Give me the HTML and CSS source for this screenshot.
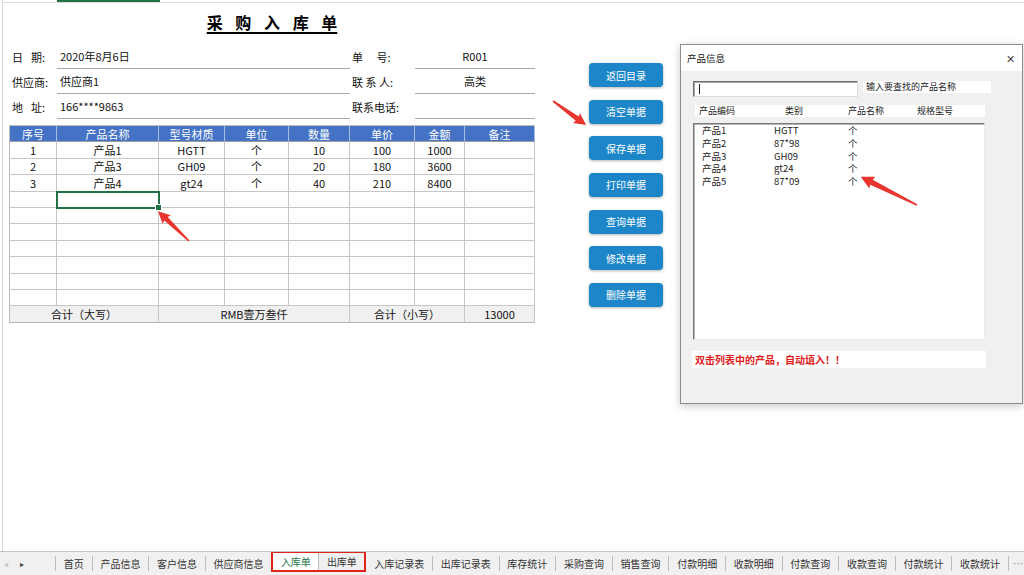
FILE: index.html
```html
<!DOCTYPE html>
<html lang="zh-CN">
<head>
<meta charset="utf-8">
<title>采购入库单</title>
<link rel="stylesheet" href="styles.css">
</head>
<body>
<div class="app">
  <div class="sheet">
    <div class="colhead"><span class="colsel"></span></div>
    <div class="content">
      <div class="form">
        <div class="title"><span>采 购 入 库 单</span></div>
        <div class="info">
          <div class="lbl">日&ensp; 期:</div><div class="val">2020年8月6日</div><div class="lbl2">单&emsp; 号:</div><div class="val c">R001</div>
          <div class="lbl">供应商:</div><div class="val">供应商1</div><div class="lbl2">联 系 人:</div><div class="val c">高类</div>
          <div class="lbl">地&ensp; 址:</div><div class="val">166****9863</div><div class="lbl2">联系电话:</div><div class="val c"></div>
        </div>
        <div class="tbl">
          <div class="th">序号</div><div class="th">产品名称</div><div class="th">型号材质</div><div class="th">单位</div><div class="th">数量</div><div class="th">单价</div><div class="th">金额</div><div class="th">备注</div>
          <div>1</div><div>产品1</div><div>HGTT</div><div>个</div><div>10</div><div>100</div><div>1000</div><div></div>
          <div>2</div><div>产品3</div><div>GH09</div><div>个</div><div>20</div><div>180</div><div>3600</div><div></div>
          <div>3</div><div>产品4</div><div>gt24</div><div>个</div><div>40</div><div>210</div><div>8400</div><div></div>
          <div></div><div class="sel"></div><div></div><div></div><div></div><div></div><div></div><div></div>
          <div></div><div></div><div></div><div></div><div></div><div></div><div></div><div></div>
          <div></div><div></div><div></div><div></div><div></div><div></div><div></div><div></div>
          <div></div><div></div><div></div><div></div><div></div><div></div><div></div><div></div>
          <div></div><div></div><div></div><div></div><div></div><div></div><div></div><div></div>
          <div></div><div></div><div></div><div></div><div></div><div></div><div></div><div></div>
          <div></div><div></div><div></div><div></div><div></div><div></div><div></div><div></div>
          <div class="tf span2">合计（大写）</div><div class="tf span3">RMB壹万叁仟</div><div class="tf span2">合计（小写）</div><div class="tf">13000</div>
        </div>
      </div>
      <div class="buttons">
        <button class="btn">返回目录</button>
        <button class="btn">清空单据</button>
        <button class="btn">保存单据</button>
        <button class="btn">打印单据</button>
        <button class="btn">查询单据</button>
        <button class="btn">修改单据</button>
        <button class="btn">删除单据</button>
      </div>
    </div>
  </div>

  <div class="tabs">
    <div class="nav"><span class="nl">◂</span><span class="nr">▸</span></div>
    <div class="tab">首页</div>
    <div class="tab">产品信息</div>
    <div class="tab">客户信息</div>
    <div class="tab">供应商信息</div>
    <div class="mark">
      <div class="tab active">入库单</div>
      <div class="tab">出库单</div>
    </div>
    <div class="tab nb">入库记录表</div>
    <div class="tab">出库记录表</div>
    <div class="tab">库存统计</div>
    <div class="tab">采购查询</div>
    <div class="tab">销售查询</div>
    <div class="tab">付款明细</div>
    <div class="tab">收款明细</div>
    <div class="tab">付款查询</div>
    <div class="tab">收款查询</div>
    <div class="tab">付款统计</div>
    <div class="tab">收款统计</div>
    <div class="tab more">…</div>
  </div>

  <div class="dialog">
    <div class="dlg-title"><span>产品信息</span><span class="close">✕</span></div>
    <div class="dlg-body">
      <div class="search">
        <div class="input"><span class="caret"></span></div>
        <div class="hint">输入要查找的产品名称</div>
      </div>
      <div class="lhead"><span>产品编码</span><span>类别</span><span>产品名称</span><span>规格型号</span></div>
      <div class="list">
        <div class="item"><span>产品1</span><span>HGTT</span><span>个</span></div>
        <div class="item"><span>产品2</span><span>87*98</span><span>个</span></div>
        <div class="item"><span>产品3</span><span>GH09</span><span>个</span></div>
        <div class="item"><span>产品4</span><span>gt24</span><span>个</span></div>
        <div class="item"><span>产品5</span><span>87*09</span><span>个</span></div>
      </div>
      <div class="tip">双击列表中的产品，自动填入！！</div>
    </div>
  </div>

  <svg class="arrows" width="1024" height="551" viewBox="0 0 1024 551">
    <polygon transform="translate(189,241) rotate(224)" points="0,-0.8 32,-2.5 31,-6 43,0 31,6 32,2.5 0,0.8"/>
    <polygon transform="translate(553,101) rotate(36)" points="0,-0.8 30,-2.5 29,-6 41,0 29,6 30,2.5 0,0.8"/>
    <polygon transform="translate(917,205) rotate(206.6)" points="0,-0.8 51,-2.8 50,-6.5 63,0 50,6.5 51,2.8 0,0.8"/>
  </svg>
</div>
</body>
</html>
```

FILE: styles.css
```css
* { box-sizing: border-box; margin: 0; padding: 0; }
html, body { width: 1024px; height: 575px; overflow: hidden; background: #fff; }
body { font-family: "Noto Sans CJK SC", "Liberation Sans", sans-serif; color: #111; font-size: 11px; }

.app { position: relative; width: 1024px; height: 575px; display: flex; flex-direction: column; }

.sheet { flex: 1; margin-left: 2px; border-left: 1px solid #d6d6d6; }
.colhead { height: 3px; border-bottom: 1px solid #dadada; }
.colsel { display: block; width: 103px; height: 2px; margin-left: 54px; background: #217346; }

.content { display: flex; align-items: flex-start; padding: 7px 0 0 6px; }
.form { width: 526px; }

.title { height: 24px; line-height: 24px; text-align: center; font-size: 16px; font-weight: 700; margin-bottom: 10px; color: #000; }
.title span { word-spacing: 9px; text-decoration: underline; text-decoration-thickness: 1.5px; text-underline-offset: 3px; }

.info { display: grid; grid-template-columns: 48px 293px 65px 120px; grid-auto-rows: 25px; }
.info > div { display: flex; align-items: center; white-space: pre; }
.lbl { padding-left: 3px; }
.lbl2 { padding-left: 2px; }
.val { border-bottom: 1px solid #a9a9a9; padding-left: 3px; }
.val.c { justify-content: center; padding-left: 0; }

.tbl { margin-top: 6px; display: grid; grid-template-columns: 47px 102px 66px 64px 61px 65px 50px 70px; grid-auto-rows: 16.4px; border-left: 1px solid #bdbdbd; border-top: 1px solid #bdbdbd; }
.tbl > div { display: flex; align-items: center; justify-content: center; border-right: 1px solid #c6c6c6; border-bottom: 1px solid #c6c6c6; font-size: 11px; color: #111; }
.tbl > .th { background: #4472c4; color: #fff; border-right-color: #a8bde3; border-bottom-color: #9c9c9c; }
.tbl > .tf { background: #f0f0f0; border-bottom-color: #b5b5b5; }
.span2 { grid-column: span 2; }
.span3 { grid-column: span 3; }
.tbl > .sel { position: relative; outline: 2px solid #217346; outline-offset: -1px; z-index: 1; }
.sel::after { content: ""; position: absolute; right: -4px; bottom: -4px; width: 5px; height: 5px; background: #217346; border: 1px solid #fff; }

.buttons { margin-left: 54px; margin-top: 53px; display: flex; flex-direction: column; gap: 12.67px; }
.btn { width: 74px; height: 24px; border: none; border-radius: 4px; background: #1c86c8; color: #fff; font-family: inherit; font-size: 10px; box-shadow: 0 1px 3px rgba(0,0,0,.3); display: flex; align-items: center; justify-content: center; }

.tabs { flex: none; height: 24px; border-top: 1px solid #c6c6c6; background: #f0f0f0; display: flex; align-items: center; font-size: 10px; color: #333; white-space: nowrap; overflow: hidden; }
.tabs > * { flex: none; }
.nav { width: 55px; display: flex; align-items: center; font-size: 8px; }
.nl { margin-left: 4px; color: #c4c4c4; }
.nr { margin-left: 12px; color: #444; }
.tab { padding: 0 7.8px; border-left: 1px solid #bcbcbc; line-height: 15px; }
.mark { align-self: flex-start; margin-top: -1px; height: 21px; border: 2px solid #e0231b; display: flex; align-items: stretch; }
.mark .tab { display: flex; align-items: center; line-height: normal; padding: 0 7.5px; }
.mark .tab:first-child { border-left: none; }
.tab.active { background: #fff; color: #217346; }
.tab.nb { border-left: none; }
.tab.more { color: #888; padding: 0 4px; }

.dialog { position: absolute; left: 680px; top: 44px; width: 343px; height: 360px; border: 1px solid #8c8c8c; background: #f0f0f0; box-shadow: 0 2px 8px rgba(0,0,0,.22); font-size: 9.5px; color: #222; }
.dlg-title { height: 26px; background: #fff; display: flex; align-items: center; justify-content: space-between; padding: 0 7px 0 6px; color: #111; }
.close { font-size: 11px; color: #444; }
.dlg-body { padding: 10px 0 0 12px; }
.search { display: flex; align-items: flex-start; }
.input { width: 165px; height: 16px; background: #fff; border: 1px solid; border-color: #6e6e6e #dcdcdc #dcdcdc #6e6e6e; box-shadow: inset 1px 1px 0 #a8a8a8; display: flex; align-items: center; padding-left: 5px; }
.caret { width: 1px; height: 10px; background: #222; }
.hint { margin-left: 5px; width: 128px; height: 12px; background: #fff; padding-left: 3px; line-height: 12px; font-size: 9px; }
.lhead { margin: 8px 0 0 2px; width: 290px; height: 12px; background: #fff; display: grid; grid-template-columns: 86px 63px 69px 1fr; padding-left: 4px; font-size: 9px; line-height: 12px; }
.list { margin-top: 6px; width: 292px; height: 217px; background: #fff; border: 1px solid; border-color: #7a7a7a #ececec #ececec #7a7a7a; box-shadow: inset 1px 1px 0 #b4b4b4; padding-left: 8px; }
.item { display: grid; grid-template-columns: 72px 74px 1fr; height: 12.8px; line-height: 12.8px; }
.tip { margin: 11px 0 0 -1px; width: 294px; height: 17px; background: #fff; color: #e0201b; font-weight: 700; font-size: 10px; line-height: 17px; padding-left: 3px; }

.arrows { position: absolute; left: 0; top: 0; pointer-events: none; z-index: 5; }
.arrows polygon { fill: #e8352e; }
```
